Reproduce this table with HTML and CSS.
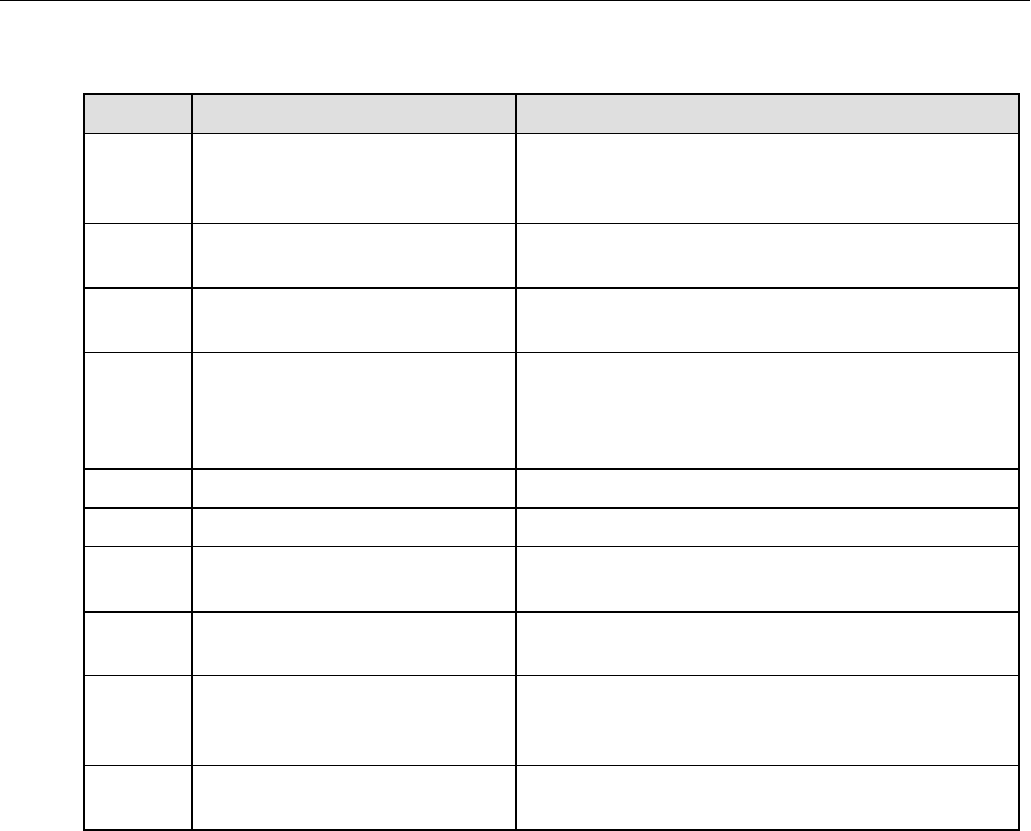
FILE: index.html
```html
<!DOCTYPE html>
<html lang="en">
<head>
<meta charset="utf-8">
<title>Table</title>
<link rel="stylesheet" href="styles.css">
</head>
<body>
<div class="rule"></div>
<div class="tbl">
  <div class="row head thin h39"><div class="cell"></div><div class="cell"></div><div class="cell"></div></div>
  <div class="row thin h90"><div class="cell"></div><div class="cell"></div><div class="cell"></div></div>
  <div class="row thick h65"><div class="cell"></div><div class="cell"></div><div class="cell"></div></div>
  <div class="row thin h64"><div class="cell"></div><div class="cell"></div><div class="cell"></div></div>
  <div class="row thick h117"><div class="cell"></div><div class="cell"></div><div class="cell"></div></div>
  <div class="row thick h39"><div class="cell"></div><div class="cell"></div><div class="cell"></div></div>
  <div class="row thin h38"><div class="cell"></div><div class="cell"></div><div class="cell"></div></div>
  <div class="row thick h66"><div class="cell"></div><div class="cell"></div><div class="cell"></div></div>
  <div class="row thin h63"><div class="cell"></div><div class="cell"></div><div class="cell"></div></div>
  <div class="row thin h90"><div class="cell"></div><div class="cell"></div><div class="cell"></div></div>
  <div class="row last h63"><div class="cell"></div><div class="cell"></div><div class="cell"></div></div>
</div>
</body>
</html>
```

FILE: styles.css
```css
html, body {
  margin: 0;
  padding: 0;
  background: #ffffff;
  font-family: "Liberation Sans", Arial, sans-serif;
}
.rule {
  width: 1030px;
  height: 1px;
  background: #000000;
}
.tbl {
  box-sizing: border-box;
  margin-top: 92px;
  margin-left: 83px;
  width: 937px;
  border: 2px solid #000000;
  display: flex;
  flex-direction: column;
}
.row {
  box-sizing: border-box;
  display: grid;
  grid-template-columns: 108px 324px 1fr;
}
.row.thin { border-bottom: 1px solid #000000; }
.row.thick { border-bottom: 2px solid #000000; }
.row.head { background: #dfdfdf; }
.cell { box-sizing: border-box; }
.cell:not(:last-child) { border-right: 2px solid #000000; }
.h38 { height: 38px; }
.h39 { height: 39px; }
.h63 { height: 63px; }
.h64 { height: 64px; }
.h65 { height: 65px; }
.h66 { height: 66px; }
.h90 { height: 90px; }
.h117 { height: 117px; }
```
